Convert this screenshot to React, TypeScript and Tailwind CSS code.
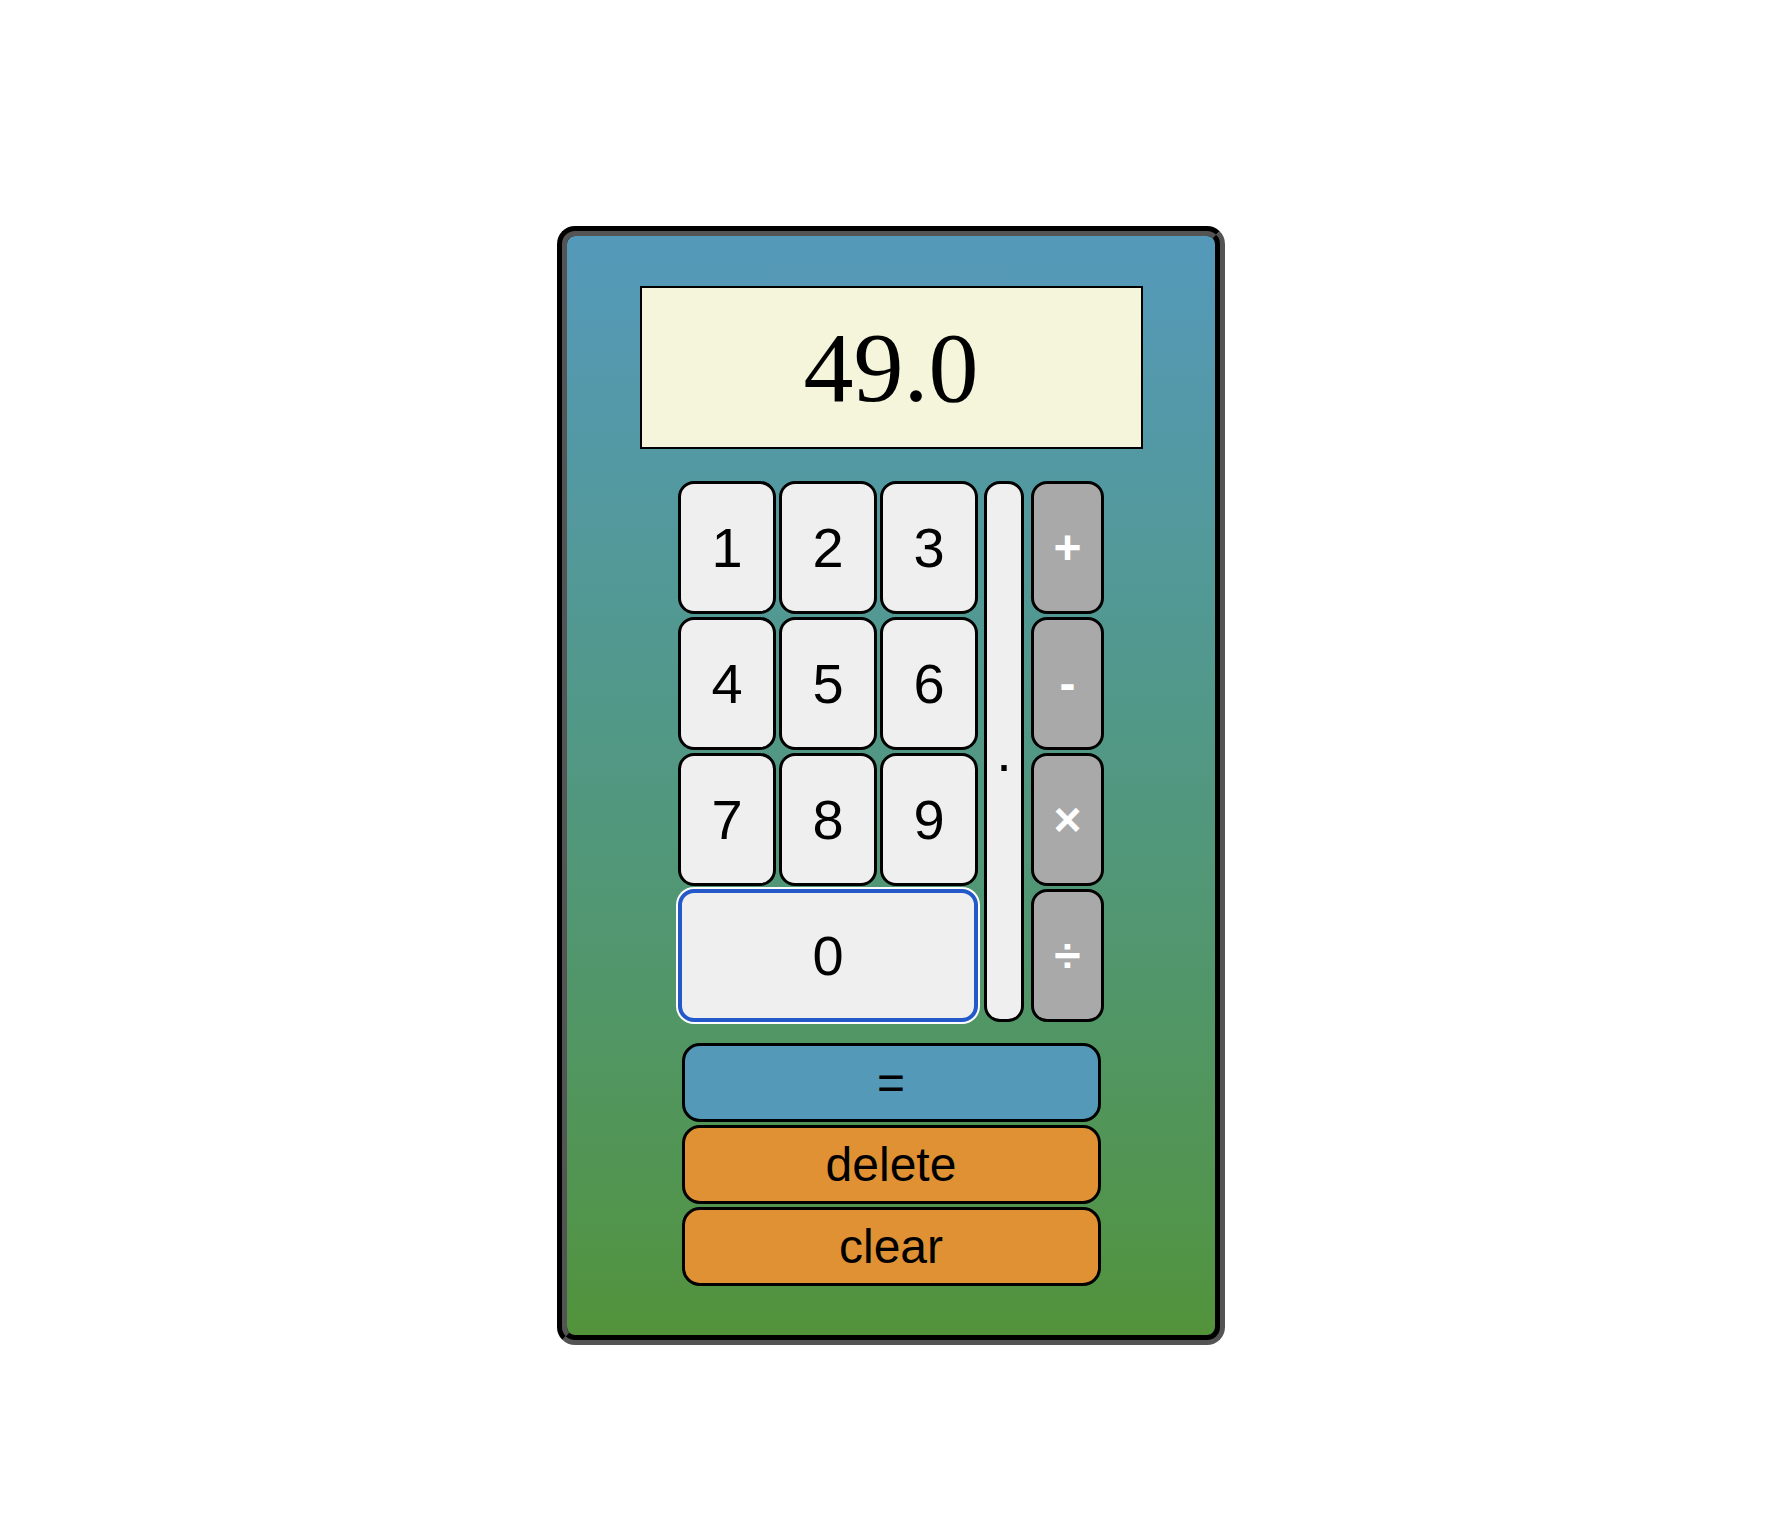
import React from "react";

const digitKey =
  "flex items-center justify-center rounded-2xl border-[3px] border-black bg-[#efefef] text-[56px] text-black";
const opKey =
  "flex items-center justify-center rounded-2xl border-[3px] border-black bg-[#a9a9a9] text-[48px] font-bold text-white";
const wideKey =
  "flex h-[79px] w-[419px] items-center justify-center rounded-[18px] border-[3px] border-black text-[48px] leading-none text-black";

export default function App() {
  return (
    <div className="flex min-h-[1516px] justify-center bg-white pr-[6px] pt-[226px] font-['Liberation_Sans',Arial,sans-serif]">
      <div className="flex h-[1119px] w-[668px] flex-col items-center rounded-[18px] border-[10px] border-black bg-gradient-to-b from-[#5599ba] to-[#52933a] [border-style:groove]">
        {/* display */}
        <div className="mt-[50px] flex h-[163px] w-[503px] items-center justify-center border-2 border-black bg-[#f5f5dc] font-['Liberation_Serif','Times_New_Roman',serif] text-[100px] leading-none text-black">
          49.0
        </div>

        {/* keypad */}
        <div className="mt-[32px] grid grid-cols-[98px_98px_98px_43px_77px] grid-rows-[133px_133px_133px_133px] gap-x-[3px] gap-y-[3px]">
          <button className={digitKey}>1</button>
          <button className={digitKey}>2</button>
          <button className={digitKey}>3</button>
          <button className="row-span-4 ml-[3px] flex items-center justify-center rounded-2xl border-[3px] border-black bg-[#efefef] text-[56px] text-black">
            .
          </button>
          <button className={`${opKey} ml-[4px]`}>+</button>

          <button className={digitKey}>4</button>
          <button className={digitKey}>5</button>
          <button className={digitKey}>6</button>
          <button className={`${opKey} ml-[4px]`}>-</button>

          <button className={digitKey}>7</button>
          <button className={digitKey}>8</button>
          <button className={digitKey}>9</button>
          <button className={`${opKey} ml-[4px]`}>×</button>

          {/* focused key */}
          <button className="col-span-3 flex items-center justify-center rounded-2xl border-4 border-[#2459c9] bg-[#efefef] text-[56px] text-black ring-2 ring-white">
            0
          </button>
          <button className={`${opKey} ml-[4px]`}>÷</button>
        </div>

        {/* bottom actions */}
        <div className="mt-[21px] flex flex-col gap-[3px]">
          <button className={`${wideKey} bg-[#5499b8]`}>=</button>
          <button className={`${wideKey} bg-[#e09133]`}>delete</button>
          <button className={`${wideKey} bg-[#e09133]`}>clear</button>
        </div>
      </div>
    </div>
  );
}
